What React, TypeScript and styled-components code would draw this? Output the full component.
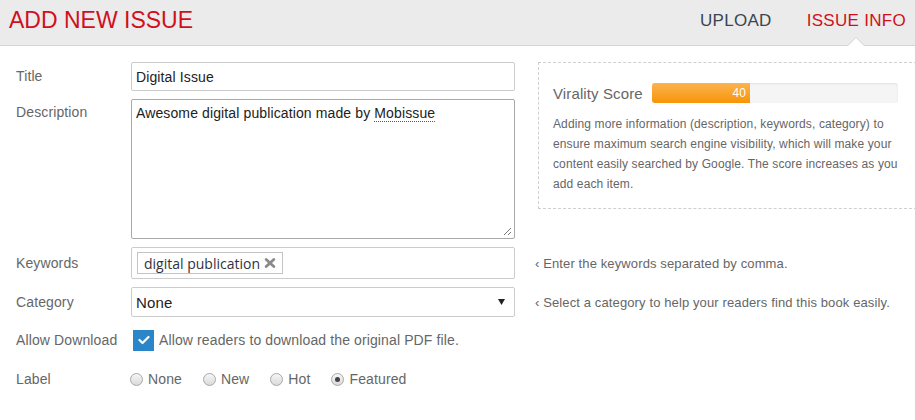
import React from 'react';
import styled, { createGlobalStyle } from 'styled-components';

const GlobalStyle = createGlobalStyle`
  body {
    margin: 0;
    background: #fff;
    font-family: 'Liberation Sans', Arial, sans-serif;
    letter-spacing: 0.12px;
    overflow: hidden;
  }
`;

const Header = styled.header`
  height: 45px;
  background: #ebebeb;
  border-bottom: 1px solid #d4d4d4;
  display: flex;
  align-items: stretch;
  justify-content: space-between;
  padding: 0 9px;
`;

const PageTitle = styled.h1`
  margin: 0;
  padding-bottom: 4px;
  display: flex;
  align-items: center;
  font-size: 23px;
  font-weight: normal;
  letter-spacing: 0;
  color: #d0101b;
`;

const Tabs = styled.nav`
  display: flex;
  gap: 35px;
`;

const Tab = styled.a<{ $active?: boolean }>`
  position: relative;
  display: flex;
  align-items: center;
  padding-bottom: 4px;
  font-size: 17px;
  letter-spacing: 0.3px;
  color: ${(p) => (p.$active ? '#d0101b' : '#3b4450')};
  text-decoration: none;

  ${(p) =>
    p.$active &&
    `
    &::before, &::after {
      content: '';
      position: absolute;
      left: 50%;
      transform: translateX(-50%);
      bottom: -1px;
      width: 0;
      height: 0;
      border-left: 9px solid transparent;
      border-right: 9px solid transparent;
    }
    &::before { border-bottom: 9px solid #d4d4d4; }
    &::after {
      border-left-width: 8px;
      border-right-width: 8px;
      border-bottom: 8px solid #fff;
    }
  `}
`;

const Main = styled.main`
  padding: 16px 0 0 16px;
  overflow: hidden;
`;

const Top = styled.div`
  display: flex;
  align-items: flex-start;
`;

const Fields = styled.div`
  width: 499px;
  flex-shrink: 0;
`;

const Row = styled.div<{ $mt?: number; $top?: boolean; $h?: number }>`
  display: flex;
  align-items: ${(p) => (p.$top ? 'flex-start' : 'center')};
  margin-top: ${(p) => p.$mt ?? 0}px;
  ${(p) => (p.$h ? `height: ${p.$h}px;` : '')}
`;

const Label = styled.label`
  width: 115px;
  flex-shrink: 0;
  font-size: 14px;
  line-height: 27px;
  color: #666;
`;

const TextInput = styled.input`
  width: 384px;
  height: 29px;
  box-sizing: border-box;
  border: 1px solid #ccc;
  border-radius: 2px;
  padding: 0 4px;
  font: 14px 'Liberation Sans', Arial, sans-serif;
  letter-spacing: 0.12px;
  color: #222;
  outline: none;
`;

const TextArea = styled.div`
  position: relative;
  width: 384px;
  height: 140px;
  box-sizing: border-box;
  border: 1px solid #a9a9a9;
  border-radius: 2px;
  padding: 5px 4px;
  font-size: 14px;
  line-height: 16px;
  color: #222;
`;

const Misspelled = styled.span`
  text-decoration-line: underline;
  text-decoration-style: dotted;
  text-decoration-color: #e8202a;
  text-decoration-thickness: 1px;
  text-underline-offset: 3px;
`;

const Grip = styled.svg`
  position: absolute;
  right: 2px;
  bottom: 2px;
`;

const TagBox = styled.div`
  width: 384px;
  height: 32px;
  box-sizing: border-box;
  border: 1px solid #ccc;
  border-radius: 2px;
  padding: 4px 5px;
  display: flex;
  align-items: flex-start;
`;

const Tag = styled.span`
  height: 22px;
  box-sizing: border-box;
  border: 1px solid #c4c4c4;
  padding: 0 6px;
  display: inline-flex;
  align-items: center;
  gap: 4px;
  font: 14px 'Open Sans', sans-serif;
  letter-spacing: 0;
  color: #2f3340;
`;

const SelectBox = styled.div`
  width: 384px;
  height: 30px;
  box-sizing: border-box;
  border: 1px solid #ccc;
  border-radius: 2px;
  padding: 0 9px 0 4px;
  display: flex;
  align-items: center;
  justify-content: space-between;
  font-size: 15px;
  color: #222;
`;

const Hint = styled.span`
  margin-left: 20px;
  font-size: 13px;
  color: #666;
  white-space: nowrap;
`;

const Panel = styled.aside`
  margin-left: 23px;
  width: 384px;
  flex-shrink: 0;
  box-sizing: border-box;
  border: 1px dashed #cfcfcf;
  padding: 20px 15px 14px 14px;
`;

const ScoreRow = styled.div`
  display: flex;
  align-items: center;
  height: 20px;
`;

const ScoreLabel = styled.span`
  font-size: 15px;
  color: #666;
  margin-right: 9px;
  white-space: nowrap;
`;

const Bar = styled.div`
  width: 246px;
  height: 20px;
  border-radius: 3px;
  background: #f5f5f5;
  box-shadow: inset 0 1px 2px rgba(0, 0, 0, 0.08);
  overflow: hidden;
`;

const Fill = styled.div`
  height: 100%;
  box-sizing: border-box;
  background: linear-gradient(#fbb450, #f89406);
  color: #fff;
  font-size: 12px;
  line-height: 20px;
  text-align: right;
  padding-right: 4px;
`;

const PanelText = styled.p`
  margin: 11px 0 0;
  width: 356px;
  font-size: 12px;
  line-height: 20px;
  color: #666;
`;

const CheckRow = styled.label`
  display: flex;
  align-items: center;
  gap: 5px;
  margin-left: 2px;
  font-size: 14px;
  color: #666;
`;

const CheckBox = styled.span`
  width: 21px;
  height: 21px;
  background: #2a86c8;
  display: flex;
  align-items: center;
  justify-content: center;
`;

const RadioGroup = styled.div`
  display: flex;
  gap: 21px;
  margin-left: -1px;
`;

const RadioItem = styled.label`
  display: flex;
  align-items: center;
  gap: 5px;
  font-size: 14px;
  color: #666;
`;

const RadioDot = styled.span<{ $checked?: boolean }>`
  width: 13px;
  height: 13px;
  box-sizing: border-box;
  border-radius: 50%;
  border: 1px solid #a8a8a8;
  background: linear-gradient(#f6f6f6, #dadada);
  display: flex;
  align-items: center;
  justify-content: center;

  &::after {
    content: '';
    width: 5px;
    height: 5px;
    border-radius: 50%;
    background: #444;
    display: ${(p) => (p.$checked ? 'block' : 'none')};
  }
`;

const labels = ['None', 'New', 'Hot', 'Featured'];

export default function App() {
  const score = 40;
  return (
    <>
      <GlobalStyle />
      <Header>
        <PageTitle>ADD NEW ISSUE</PageTitle>
        <Tabs>
          <Tab>UPLOAD</Tab>
          <Tab $active>ISSUE INFO</Tab>
        </Tabs>
      </Header>
      <Main>
        <Top>
          <Fields>
            <Row>
              <Label>Title</Label>
              <TextInput defaultValue="Digital Issue" />
            </Row>
            <Row $mt={8} $top>
              <Label>Description</Label>
              <TextArea>
                Awesome digital publication made by <Misspelled>Mobissue</Misspelled>
                <Grip width="9" height="9" viewBox="0 0 9 9">
                  <path d="M8 1 L1 8 M8 5 L5 8" stroke="#777" strokeWidth="1" />
                </Grip>
              </TextArea>
            </Row>
          </Fields>
          <Panel>
            <ScoreRow>
              <ScoreLabel>Virality Score</ScoreLabel>
              <Bar>
                <Fill style={{ width: `${score}%` }}>{score}</Fill>
              </Bar>
            </ScoreRow>
            <PanelText>
              Adding more information (description, keywords, category) to ensure maximum search
              engine visibility, which will make your content easily searched by Google. The score
              increases as you add each item.
            </PanelText>
          </Panel>
        </Top>
        <Row $mt={8}>
          <Label>Keywords</Label>
          <TagBox>
            <Tag>
              digital publication
              <svg width="12" height="10" viewBox="0 0 12 10">
                <path
                  d="M2.2 1.5 L9.8 8.5 M9.8 1.5 L2.2 8.5"
                  stroke="#8a8a8a"
                  strokeWidth="2.8"
                  strokeLinecap="round"
                />
              </svg>
            </Tag>
          </TagBox>
          <Hint>‹ Enter the keywords separated by comma.</Hint>
        </Row>
        <Row $mt={8}>
          <Label>Category</Label>
          <SelectBox>
            None
            <svg width="7" height="6" viewBox="0 0 7 6">
              <path d="M0 0 H7 L3.5 6 Z" fill="#222" />
            </svg>
          </SelectBox>
          <Hint>‹ Select a category to help your readers find this book easily.</Hint>
        </Row>
        <Row $mt={12} $h={22}>
          <Label>Allow Download</Label>
          <CheckRow>
            <CheckBox>
              <svg width="12" height="10" viewBox="0 0 12 10">
                <path
                  d="M1.5 5 L4.5 8 L10.5 2"
                  stroke="#fff"
                  strokeWidth="2.2"
                  fill="none"
                  strokeLinecap="round"
                  strokeLinejoin="round"
                />
              </svg>
            </CheckBox>
            Allow readers to download the original PDF file.
          </CheckRow>
        </Row>
        <Row $mt={17} $h={22}>
          <Label>Label</Label>
          <RadioGroup>
            {labels.map((l) => (
              <RadioItem key={l}>
                <RadioDot $checked={l === 'Featured'} />
                {l}
              </RadioItem>
            ))}
          </RadioGroup>
        </Row>
      </Main>
    </>
  );
}
